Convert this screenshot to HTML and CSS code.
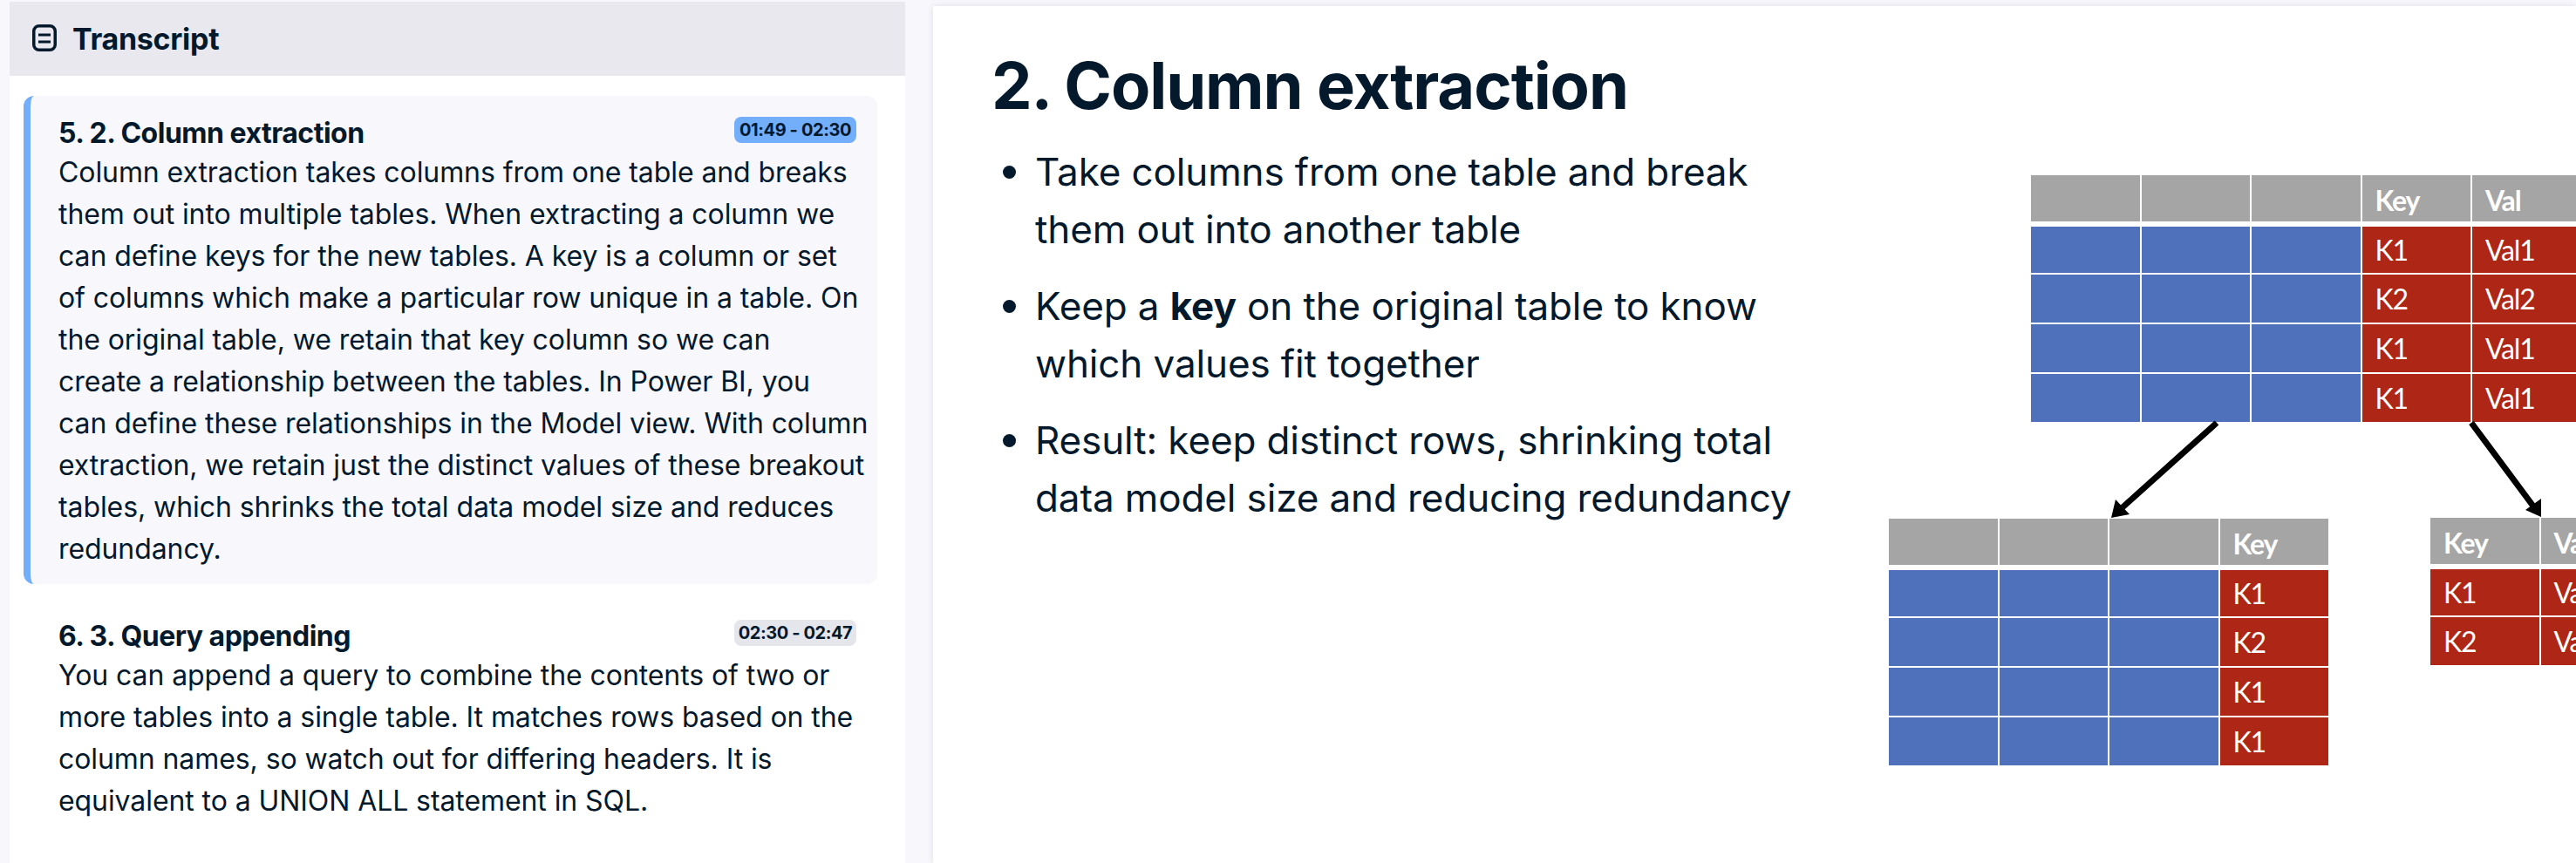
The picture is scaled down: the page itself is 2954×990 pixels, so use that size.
FILE: index.html
```html
<!DOCTYPE html>
<html>
<head>
    <meta http-equiv="Content-Type" content="text/html; charset=utf-8" />
    <title>Transcript</title>
    <link rel="stylesheet" href="styles.css">
</head>
<body>
<div class="page">
    <div class="side">
        <div class="side-head">
            <svg class="side-icon" viewBox="0 0 28 31"><rect x="1.75" y="1.75" width="24.5" height="27.5" rx="6" fill="none" stroke="#05192d" stroke-width="3.5"/><path d="M7 12h14M7 20h14" stroke="#05192d" stroke-width="3"/></svg>
            <span class="side-title">Transcript</span>
        </div>
        <div class="side-list">
            <div class="item item-on">
                <div class="item-top">
                    <span class="item-title">5. 2. Column extraction</span>
                    <span class="stamp stamp-on">01:49 - 02:30</span>
                </div>
                <p class="item-text">Column extraction takes columns from one table and breaks<br>them out into multiple tables. When extracting a column we<br>can define keys for the new tables. A key is a column or set<br>of columns which make a particular row unique in a table. On<br>the original table, we retain that key column so we can<br>create a relationship between the tables. In Power BI, you<br>can define these relationships in the Model view. With column<br>extraction, we retain just the distinct values of these breakout<br>tables, which shrinks the total data model size and reduces<br>redundancy.</p>
            </div>
            <div class="item">
                <div class="item-top">
                    <span class="item-title">6. 3. Query appending</span>
                    <span class="stamp">02:30 - 02:47</span>
                </div>
                <p class="item-text">You can append a query to combine the contents of two or<br>more tables into a single table. It matches rows based on the<br>column names, so watch out for differing headers. It is<br>equivalent to a UNION ALL statement in SQL.</p>
            </div>
        </div>
    </div>
    <div class="slide">
        <div class="slide-text">
            <h1>2. Column extraction</h1>
            <ul>
                <li>Take columns from one table and break<br>them out into another table</li>
                <li>Keep a <b>key</b> on the original table to know<br>which values fit together</li>
                <li>Result: keep distinct rows, shrinking total<br>data model size and reducing redundancy</li>
            </ul>
        </div>
        <div class="chart">
            <div class="tbl tbl-top">
                <div class="cell head"></div><div class="cell head"></div><div class="cell head"></div><div class="cell head bold">Key</div><div class="cell head bold">Val</div>
                <div class="cell blue"></div><div class="cell blue"></div><div class="cell blue"></div><div class="cell red">K1</div><div class="cell red">Val1</div>
                <div class="cell blue"></div><div class="cell blue"></div><div class="cell blue"></div><div class="cell red">K2</div><div class="cell red">Val2</div>
                <div class="cell blue"></div><div class="cell blue"></div><div class="cell blue"></div><div class="cell red">K1</div><div class="cell red">Val1</div>
                <div class="cell blue"></div><div class="cell blue"></div><div class="cell blue"></div><div class="cell red">K1</div><div class="cell red">Val1</div>
            </div>
            <div class="tbl tbl-left">
                <div class="cell head"></div><div class="cell head"></div><div class="cell head"></div><div class="cell head bold">Key</div>
                <div class="cell blue"></div><div class="cell blue"></div><div class="cell blue"></div><div class="cell red">K1</div>
                <div class="cell blue"></div><div class="cell blue"></div><div class="cell blue"></div><div class="cell red">K2</div>
                <div class="cell blue"></div><div class="cell blue"></div><div class="cell blue"></div><div class="cell red">K1</div>
                <div class="cell blue"></div><div class="cell blue"></div><div class="cell blue"></div><div class="cell red">K1</div>
            </div>
            <div class="tbl tbl-right">
                <div class="cell head bold">Key</div><div class="cell head bold">Val</div>
                <div class="cell red">K1</div><div class="cell red">Val1</div>
                <div class="cell red">K2</div><div class="cell red">Val2</div>
            </div>
            <svg class="arrows" viewBox="0 0 1884 983">
                <path d="M1472 478L1364 575M1764 478L1836 575" fill="none" stroke="#000" stroke-width="7"/>
                <path d="M1351 587L1356 566L1372 583Z M1844 586L1844 565L1826 578Z" fill="#000"/>
            </svg>
        </div>
    </div>
</div>
</body>
</html>
```

FILE: styles.css
```css
*{ margin: 0; padding: 0; box-sizing: border-box;}
html, body{ width: 2954px; height: 990px; overflow: hidden;}
body{ background: #f7f7fc; color: #05192d; font-family: "Inter", "Noto Sans", sans-serif;}
.page{ display: flex; gap: 32px; height: 990px; padding: 2px 0 0 11px;}

.side{ width: 1027px; background: #fff; flex: none;}
.side-head{ display: flex; align-items: center; gap: 18px; height: 85px; padding-left: 26px; background: #e8e8ee;}
.side-icon{ width: 28px; height: 31px; margin-top: -2px;}
.side-title{ font-size: 34px; font-weight: 700; letter-spacing: -.3px;}
.side-list{ padding: 23px 32px 0 16px;}
.item{ padding: 24px 24px 0 32px;}
.item-on{ height: 560px; background: #f7f7fc; border-left: 8px solid #73aefb; border-radius: 12px;}
.item:not(.item-on){ margin-top: 41px; padding-top: 0; padding-left: 40px;}
.item-top{ display: flex; justify-content: space-between; align-items: flex-start; height: 40px;}
.item-title{ font-size: 32px; font-weight: 700; line-height: 38px; letter-spacing: -.5px;}
.stamp{ height: 30px; line-height: 30px; width: 140px; text-align: center; border-radius: 8px; background: #e5e5ec; font-size: 20px; font-weight: 700; letter-spacing: -.4px;}
.stamp-on{ background: #73aefb;}
.item-text{ font-size: 32px; line-height: 48px; white-space: nowrap; letter-spacing: -.08px;}

.slide{ flex: 1; position: relative; margin-top: 5px; background: #fff; box-shadow: 0 0 8px rgba(5,25,45,.1); overflow: hidden;}
.slide-text{ padding: 43px 0 0 67px;}
.slide-text h1{ font-size: 74px; font-weight: 700; line-height: 96px; letter-spacing: -1.1px;}
.slide-text ul{ list-style: none; margin: 18px 0 0 3px;}
.slide-text li{ position: relative; padding-left: 47px; margin-bottom: 22px; font-size: 44px; line-height: 66px; white-space: nowrap; letter-spacing: -.12px;}
.slide-text li::before{ content: ""; position: absolute; left: 10px; top: 26px; width: 15px; height: 15px; border-radius: 50%; background: #05192d;}

.chart{ position: absolute; left: 0; top: 0; width: 1884px; height: 983px;}
.tbl{ position: absolute; display: grid; gap: 2px; background: #fff;}
.cell{ display: flex; align-items: center; padding-left: 15px; color: #fff; font-family: "Lato", sans-serif; font-size: 32px; letter-spacing: -1.2px;}
.head{ background: #a5a5a5; margin-bottom: 4px;}
.bold{ font-weight: 700; padding-top: 3px;}
.blue{ background: #4f71bc;}
.red{ background: #ae2716;}
.tbl-top{ left: 1259px; top: 194px; grid-template-columns: repeat(5, 124.5px); grid-template-rows: 57px 53px 55px 55px 55px;}
.tbl-left{ left: 1096px; top: 588px; grid-template-columns: repeat(4, 124.5px); grid-template-rows: 57px 53px 55px 55px 55px;}
.tbl-right{ left: 1717px; top: 587px; grid-template-columns: repeat(2, 124.5px); grid-template-rows: 57px 53px 55px;}
.arrows{ position: absolute; left: 0; top: 0; width: 1884px; height: 983px;}
```
